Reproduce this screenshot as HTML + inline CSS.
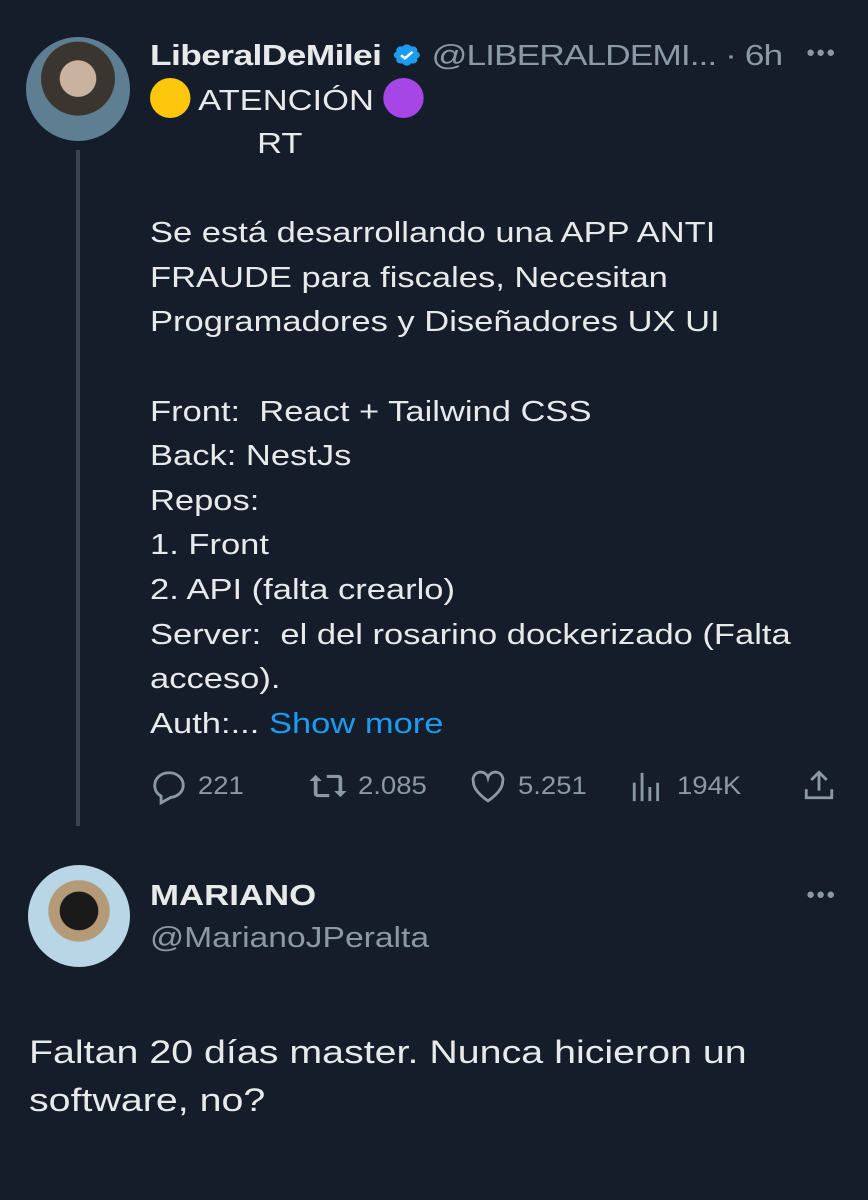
<!DOCTYPE html><html><head><meta charset="utf-8"><style>
body{margin:0;width:868px;height:1200px;background:#151d2a;font-family:"Liberation Sans",sans-serif;color:#e7e9ea;position:relative;overflow:hidden}
.a{position:absolute;white-space:nowrap}
.t{font-size:29px;line-height:44.6px}
.g{color:#8b98a5}
.s{transform-origin:0 0}
</style></head><body>
<div class="a" style="left:26px;top:37px;width:104px;height:104px;border-radius:50%;background:radial-gradient(circle at 50% 40%,#c9b3a0 0 22%,#3b3530 23% 45%,#5e7e92 46%);"></div>
<div class="a" style="left:76px;top:150px;width:4px;height:676px;background:#3a4450"></div>
<div class="a s" style="left:150px;top:36px;font-size:29px;line-height:40px;transform:scaleX(1.22)"><b style="letter-spacing:-0.5px">LiberalDeMilei</b> <svg width="25" height="30" viewBox="0 0 24 24" style="vertical-align:-5px"><path fill="#1d9bf0" d="M22.25 12c0-1.430-.88-2.67-2.19-3.34.46-1.39.2-2.9-.81-3.91s-2.52-1.27-3.91-.81c-.66-1.31-1.910-2.19-3.34-2.19s-2.67.88-3.33 2.19c-1.4-.46-2.91-.2-3.92.81s-1.26 2.52-.8 3.91c-1.31.67-2.2 1.91-2.2 3.34s.89 2.67 2.2 3.34c-.46 1.39-.21 2.9.8 3.91s2.52 1.26 3.91.81c.67 1.31 1.91 2.19 3.34 2.19s2.68-.88 3.340-2.19c1.39.45 2.9.2 3.910-.81s1.27-2.52.81-3.91c1.31-.67 2.19-1.91 2.19-3.34z"/><path d="M7.5 12.2l3 3 6-6.2" stroke="#fff" stroke-width="2.2" fill="none"/></svg> <span class="g" style="letter-spacing:-0.8px">@LIBERALDEMI... · 6h</span></div>
<div class="a g" style="left:806px;top:44px;font-size:15px;letter-spacing:1px">●●●</div>
<div class="a t s" style="left:150px;top:78px;transform:scaleX(1.19)"><span style="display:inline-block;width:34px;height:40px;border-radius:50%;background:#fdc70c;vertical-align:-8px"></span> ATENCIÓN <span style="display:inline-block;width:34px;height:40px;border-radius:50%;background:#a646e6;vertical-align:-8px"></span></div>
<div class="a t s" style="left:150px;top:122px;line-height:44.6px;transform:scaleX(1.19)">
<div style="padding-left:90px">RT</div><br>
Se está desarrollando una APP ANTI<br>FRAUDE para fiscales, Necesitan<br>Programadores y Diseñadores UX UI<br><br>Front:&nbsp; React + Tailwind CSS<br>Back: NestJs<br>Repos:<br>1. Front<br>2. API (falta crearlo)<br>Server:&nbsp; el del rosarino dockerizado (Falta<br>acceso).<br>Auth:... <span style="color:#1d9bf0">Show more</span></div>
<div class="a g" style="left:150px;top:768px;font-size:25px;line-height:36px;width:690px">
<svg class="a" style="left:0;top:0px" width="38" height="38" viewBox="0 0 24 24"><path d="M12 3c5 0 9 3.4 9 8 0 4.5-4.2 7.2-8 7.6L7 22v-4.3C4.6 16.5 3 14 3 11c0-4.6 4-8 9-8z" fill="none" stroke="#8b98a5" stroke-width="1.8"/></svg>
<span class="a" style="left:50px;transform:scaleX(1.1)" >221</span>
<svg class="a" style="left:157px;top:3px" width="42" height="30" viewBox="0 0 34 24"><path d="M7 3l-5 5h3.5v10a3 3 0 003 3H18v-2.5H8.5V8H12zM27 21l5-5h-3.5V6a3 3 0 00-3-3H16v2.5h9.5V16H22z" fill="#8b98a5"/></svg>
<span class="a s" style="left:208px;transform:scaleX(1.1)">2.085</span>
<svg class="a" style="left:319px;top:2px" width="38" height="34" viewBox="0 0 24 22"><path d="M12 20S2.5 14 2.5 7.5A4.8 4.8 0 0112 5a4.8 4.8 0 019.5 2.5C21.5 14 12 20 12 20z" fill="none" stroke="#8b98a5" stroke-width="1.8"/></svg>
<span class="a s" style="left:368px;transform:scaleX(1.1)">5.251</span>
<svg class="a" style="left:480px;top:2px" width="34" height="34" viewBox="0 0 24 24"><path d="M3 22V9M8.5 22V2M14 22V12M19.5 22V9" stroke="#8b98a5" stroke-width="2"/></svg>
<span class="a s" style="left:527px;transform:scaleX(1.1)">194K</span>
<svg class="a" style="left:652px;top:0px" width="34" height="34" viewBox="0 0 24 24"><path d="M12 3v13M6.5 8.5L12 3l5.5 5.5M3 15v6h18v-6" fill="none" stroke="#8b98a5" stroke-width="2"/></svg>
</div>
<div class="a" style="left:28px;top:865px;width:102px;height:102px;border-radius:50%;background:radial-gradient(circle at 50% 45%,#1a1a1a 0 25%,#b59a78 26% 40%,#b8d6e6 41%)"></div>
<div class="a s" style="left:150px;top:876px;font-size:29px;font-weight:bold;line-height:40px;transform:scaleX(1.2)">MARIANO</div>
<div class="a g s" style="left:150px;top:918px;font-size:29px;line-height:40px;transform:scaleX(1.16)">@MarianoJPeralta</div>
<div class="a g" style="left:806px;top:886px;font-size:15px;letter-spacing:1px">●●●</div>
<div class="a s" style="left:29px;top:1028px;font-size:32px;line-height:48px;transform:scaleX(1.23)">Faltan 20 días master. Nunca hicieron un<br>software, no?</div>
</body></html>
